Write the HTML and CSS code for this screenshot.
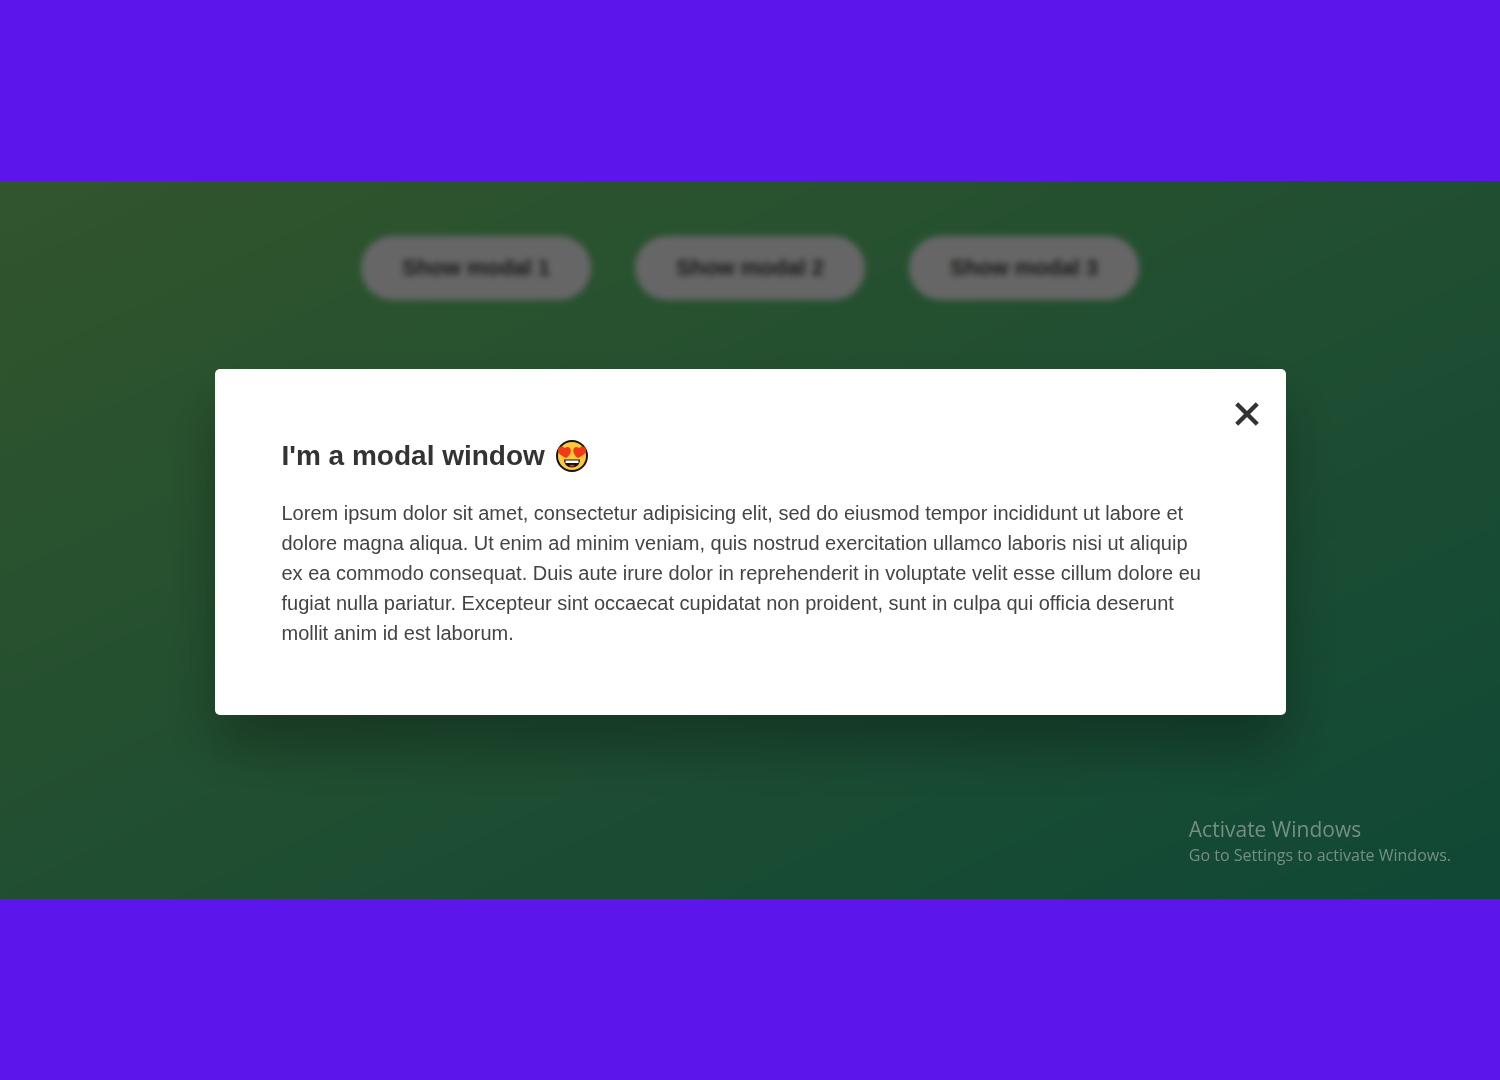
FILE: index.html
```html
<!DOCTYPE html>
<html lang="en">
<head>
  <meta charset="utf-8">
  <meta name="viewport" content="width=device-width, initial-scale=1">
  <title>Modal window</title>
  <link rel="stylesheet" href="styles.css">
</head>
<body>
  <main class="stage">
    <div class="buttons">
      <button class="show-modal" type="button">Show modal 1</button>
      <button class="show-modal" type="button">Show modal 2</button>
      <button class="show-modal" type="button">Show modal 3</button>
    </div>
    <div class="overlay">
      <section class="modal" role="dialog" aria-modal="true" aria-labelledby="modal-title">
        <button class="close-modal" type="button" aria-label="Close">
          <svg viewBox="0 0 24 24" width="26" height="26" aria-hidden="true"><path d="M2.500 2.500 21.500 21.500M21.500 2.500 2.500 21.500" fill="none" stroke="#333" stroke-width="4"/></svg>
        </button>
        <h1 class="modal-title" id="modal-title">I'm a modal window
          <svg class="emoji" viewBox="0 0 34 34" width="34" height="34" role="img" aria-label="Smiling face with heart eyes">
            <circle cx="17" cy="17" r="15" fill="#ffc83d" stroke="#17130c" stroke-width="2"/>
            <path d="M11.500 19C6 17 2.500 14 3 10.500 3.500 7 8 6.500 9.800 9.200 12 7 15.800 8 15.800 11.500 15.800 14.500 13.500 17 11.500 19Z" fill="#f03a17"/>
            <path d="M22.500 19C28 17 31.500 14 31 10.500 30.500 7 26 6.500 24.200 9.200 22 7 18.200 8 18.200 11.500 18.200 14.500 20.500 17 22.500 19Z" fill="#f03a17"/>
            <path d="M9 20.500H25C25 25.500 21.500 28.500 17 28.500S9 25.500 9 20.500Z" fill="#17130c"/>
            <path d="M10.500 21.500H23.500V24H10.500Z" fill="#fff"/>
            <path d="M14 27Q17 24.500 20 27 17 28.200 14 27Z" fill="#f03a17"/>
          </svg>
        </h1>
        <p class="modal-text">Lorem ipsum dolor sit amet, consectetur adipisicing elit, sed do eiusmod tempor incididunt ut labore et dolore magna aliqua. Ut enim ad minim veniam, quis nostrud exercitation ullamco laboris nisi ut aliquip ex ea commodo consequat. Duis aute irure dolor in reprehenderit in voluptate velit esse cillum dolore eu fugiat nulla pariatur. Excepteur sint occaecat cupidatat non proident, sunt in culpa qui officia deserunt mollit anim id est laborum.</p>
      </section>
    </div>
    <aside class="watermark">
      <p class="watermark-title">Activate Windows</p>
      <p class="watermark-text">Go to Settings to activate Windows.</p>
    </aside>
  </main>
</body>
</html>
```
FILE: styles.css
```css
* {
  box-sizing: border-box;
  margin: 0;
  padding: 0;
}

body {
  display: flex;
  flex-direction: column;
  min-height: 100vh;
  padding: 181px 0;
  background: #5c16eb;
  color: #333;
  font-family: "Liberation Sans", Arial, sans-serif;
}

.stage {
  position: relative;
  flex: 1;
  overflow: hidden;
  background: linear-gradient(to top left, #28b487, #7dd56f);
}

.buttons {
  display: flex;
  justify-content: center;
  gap: 44px;
  padding-top: 55px;
}

.show-modal {
  padding: 18px 41px;
  border: 0;
  border-radius: 32px;
  background: #fff;
  color: #444;
  font: bold 22px/28px "Liberation Sans", Arial, sans-serif;
}

.overlay {
  position: absolute;
  inset: 0;
  display: flex;
  align-items: center;
  justify-content: center;
  padding-top: 4px;
  background: rgba(0, 0, 0, 0.6);
  backdrop-filter: blur(3px);
}

.modal {
  position: relative;
  width: 72%;
  max-width: 1071px;
  padding: 67px 76px 67px 67px;
  border-radius: 5px;
  background: #fff;
  box-shadow: 0 33px 56px rgba(0, 0, 0, 0.3);
}

.close-modal {
  position: absolute;
  top: 32px;
  right: 26px;
  border: 0;
  background: none;
}

.close-modal svg,
.emoji {
  display: block;
}

.modal-title {
  display: flex;
  align-items: center;
  gap: 10px;
  margin-bottom: 22px;
  font-size: 28px;
  line-height: 40px;
}

.modal-text {
  color: #444;
  font-size: 20px;
  line-height: 30px;
}

.watermark {
  position: absolute;
  right: 49px;
  bottom: 32px;
  color: #748f82;
  font-family: "Open Sans", "Noto Sans", sans-serif;
}

.watermark-title {
  font-size: 21px;
  line-height: 28px;
}

.watermark-text {
  font-size: 16px;
  line-height: 24px;
}
```
